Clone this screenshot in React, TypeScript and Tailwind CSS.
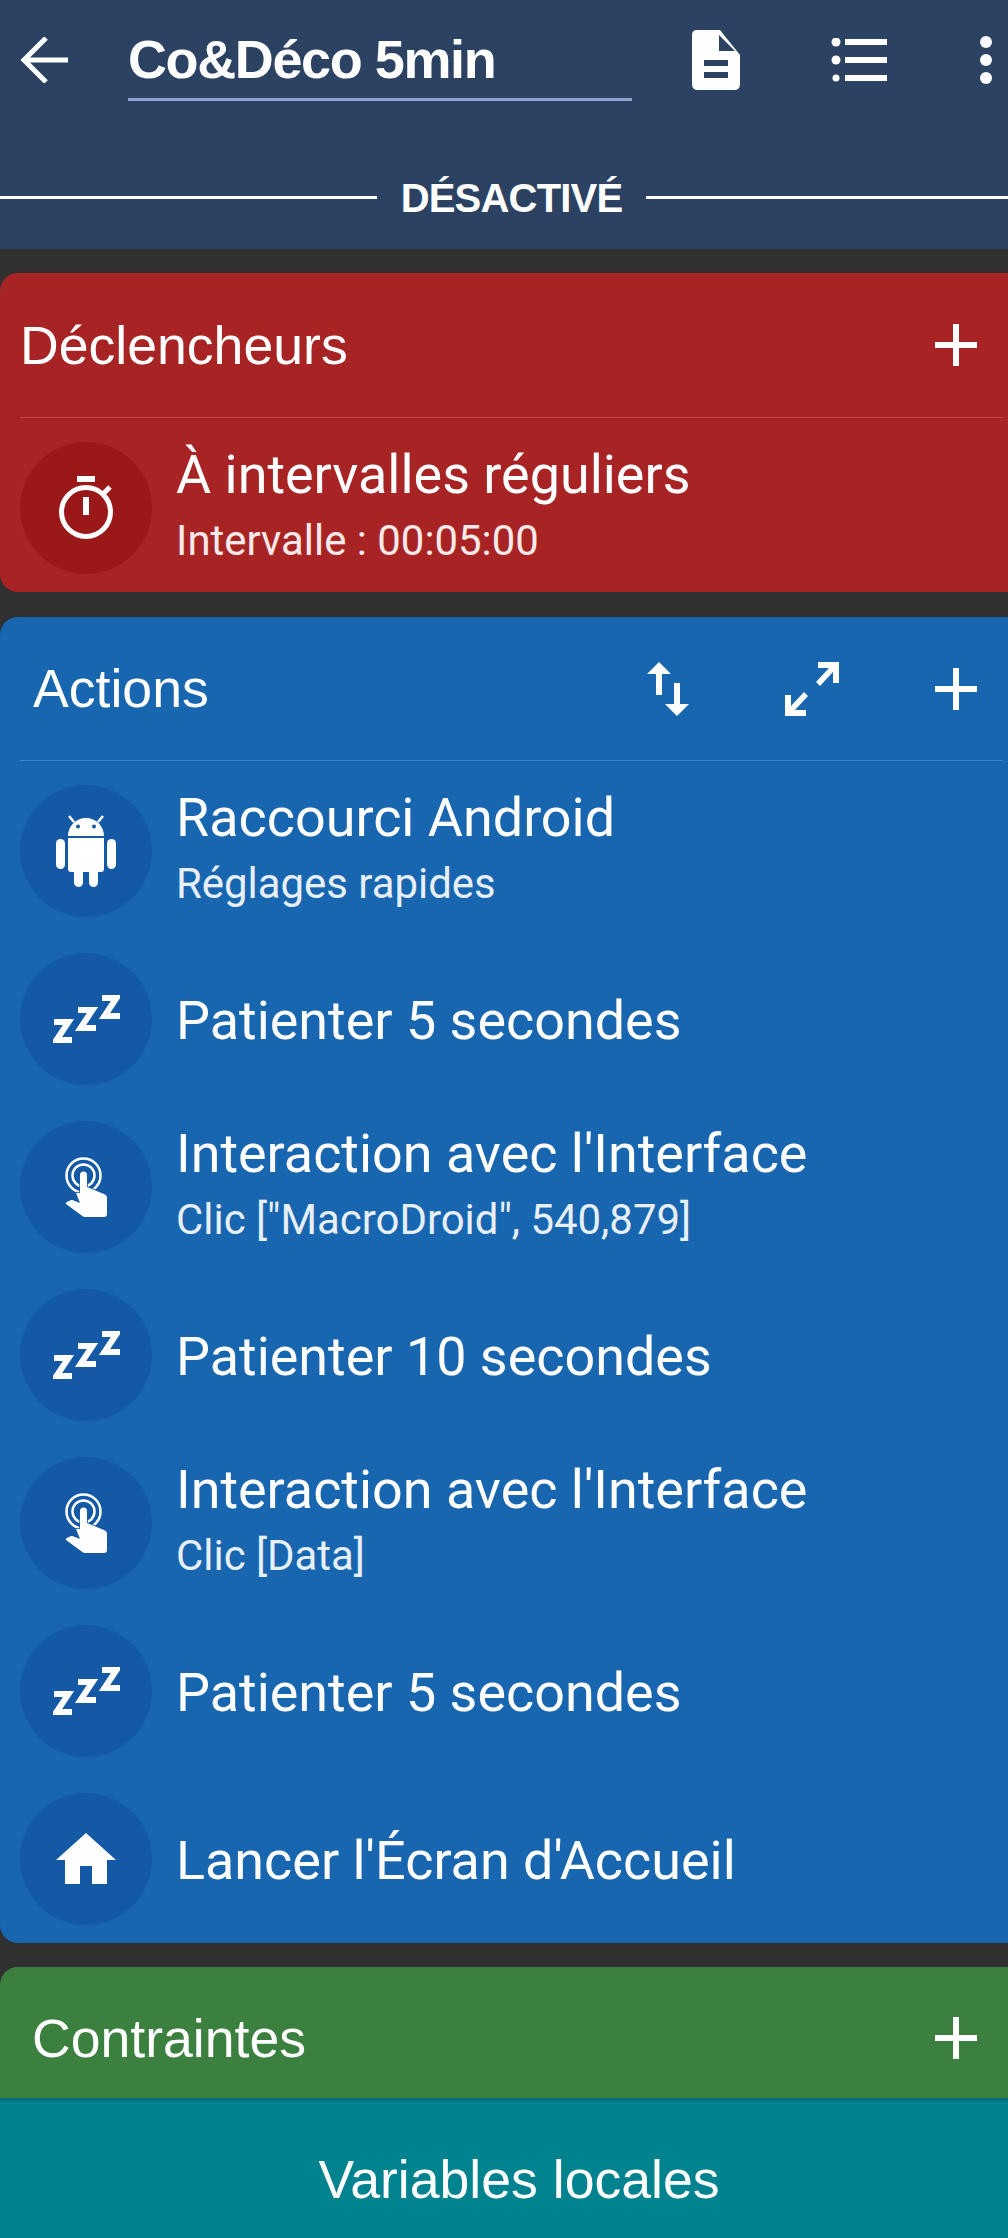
import React from 'react';

const PlusIcon = () => (
  <svg width="42" height="42" viewBox="0 0 42 42" fill="#fff">
    <rect x="18" y="0" width="6" height="42" />
    <rect x="0" y="18" width="42" height="6" />
  </svg>
);

const TimerIcon = () => (
  <svg width="54" height="64" viewBox="0 0 54 64" fill="none" stroke="#fff">
    <rect x="18" y="0" width="18" height="6" fill="#fff" stroke="none" />
    <circle cx="27" cy="36" r="24.5" strokeWidth="5" />
    <rect x="24" y="21" width="6" height="18" fill="#fff" stroke="none" />
    <path d="M44 18 L51 11" strokeWidth="5" />
  </svg>
);

const AndroidIcon = () => (
  <svg width="60" height="72" viewBox="0 0 60 72" fill="#fff">
    <path fillRule="evenodd" d="M12 21 C12 11 20 3 30 3 C40 3 48 11 48 21 Z M20 11.5 a2 2 0 1 0 4 0 a2 2 0 1 0 -4 0 Z M36 11.5 a2 2 0 1 0 4 0 a2 2 0 1 0 -4 0 Z" />
    <path d="M18 7 L13 1 M42 7 L47 1" stroke="#fff" strokeWidth="2.5" fill="none" />
    <path d="M12 23 H48 V54 Q48 57 45 57 H15 Q12 57 12 54 Z" />
    <rect x="0" y="24" width="9" height="30" rx="4.5" />
    <rect x="51" y="24" width="9" height="30" rx="4.5" />
    <rect x="18" y="48" width="9" height="24" rx="4.5" />
    <rect x="33" y="48" width="9" height="24" rx="4.5" />
  </svg>
);

const Z = ({ x, y }: { x: number; y: number }) => (
  <path transform={`translate(${x} ${y})`} d="M1 3 H15.5 L3.5 21 H19" />
);

const ZzzIcon = () => (
  <svg width="67" height="48" viewBox="0 0 67 48" fill="none" stroke="#fff" strokeWidth="6">
    <Z x={0} y={24} />
    <Z x={24} y={12} />
    <Z x={48} y={0} />
  </svg>
);

const TouchIcon = () => (
  <svg width="42" height="60" viewBox="0 0 42 60" fill="#fff">
    <circle cx="18.5" cy="18.5" r="17" fill="none" stroke="#fff" strokeWidth="2.5" />
    <circle cx="18.5" cy="18.5" r="11" fill="none" stroke="#fff" strokeWidth="2.5" />
    <path d="M11 36 H15 V18 a3.5 3.5 0 0 1 7 0 V30 L39 37 Q42 38 42 41 V57 Q42 60 39 60 H20 Q18 60 16 58 L1 47 Q0 46 2 45 L6 43 Q8 43 10 44 L15 46 Z" stroke="#1459a5" strokeWidth="1.5" paintOrder="stroke" />
  </svg>
);

const HomeIcon = () => (
  <svg width="60" height="52" viewBox="0 0 60 52" fill="#fff">
    <path d="M30 0 L60 27 H51 V51 H36 V33 H24 V51 H9 V27 H0 Z" />
  </svg>
);

const Row = ({ icon, title, sub, circle }: { icon: React.ReactNode; title: string; sub?: string; circle: string }) => (
  <div className="flex items-center h-[168px] pl-5">
    <div className={`w-[132px] h-[132px] rounded-full flex items-center justify-center shrink-0 ${circle}`}>{icon}</div>
    <div className={`ml-6 flex flex-col ${sub ? 'pb-[6px]' : ''}`}>
      <div className={`text-[53.9px] leading-[60px] text-white ${sub ? '' : 'pt-[3px]'}`}>{title}</div>
      {sub && <div className="text-[41.9px] leading-[50px] mt-[11px] text-white/90">{sub}</div>}
    </div>
  </div>
);

const blueCircle = 'bg-[#1459a5]';

export default function App() {
  return (
    <div className="w-[1008px] h-[2238px] overflow-hidden flex flex-col bg-[#303030] font-['Roboto',sans-serif] text-white">
      <header className="h-[249px] bg-[#2c4262] shrink-0 flex flex-col">
        <div className="flex items-start h-[102px]">
          <svg className="ml-5 mt-[37px] shrink-0" width="48" height="46" viewBox="0 0 48 46" fill="none" stroke="#fff" strokeWidth="5">
            <path d="M26 1 L4 23 L26 45 M4 23 H48" />
          </svg>
          <div className="ml-[60px] w-[504px] h-[101px] border-b-[3px] border-[#8b9fd0] pt-[29px] text-[54px] leading-[60px] font-['Liberation_Sans',sans-serif] font-bold tracking-[-1.4px] shrink-0">
            Co&amp;Déco 5min
          </div>
          <svg className="ml-[60px] mt-[30px] shrink-0" width="48" height="60" viewBox="0 0 48 60" fill="#fff">
            <path fillRule="evenodd" d="M5 0 H28 L48 25 V54 Q48 60 42 60 H6 Q0 60 0 54 V5 Q0 0 5 0 Z M12 30 V36 H36 V30 Z M12 42 V48 H36 V42 Z" />
            <path d="M27 5 V21 H43 Z" fill="#2c4262" />
          </svg>
          <svg className="ml-[91px] mt-[38px] shrink-0" width="56" height="44" viewBox="0 0 56 44" fill="#fff">
            <circle cx="5" cy="4" r="4.5" />
            <circle cx="5" cy="22" r="4.5" />
            <circle cx="5" cy="40" r="3.5" />
            <rect x="14" y="1" width="42" height="6" />
            <rect x="14" y="19" width="42" height="6" />
            <rect x="14" y="37" width="42" height="6" />
          </svg>
          <svg className="ml-[93px] mt-[36px] shrink-0" width="12" height="48" viewBox="0 0 12 48" fill="#fff">
            <circle cx="6" cy="6" r="6" />
            <circle cx="6" cy="24" r="6" />
            <circle cx="6" cy="42" r="6" />
          </svg>
        </div>
        <div className="flex items-center mt-[63px]">
          <div className="w-[377px] h-[3px] bg-white" />
          <div className="w-[269px] text-center text-[40px] leading-[62px] pt-[2px] font-['Liberation_Sans',sans-serif] font-bold tracking-[-0.8px]">DÉSACTIVÉ</div>
          <div className="flex-1 h-[3px] bg-white" />
        </div>
      </header>

      <section className="mt-6 h-[319px] shrink-0 bg-[#a82424] rounded-l-[18px] flex flex-col">
        <div className="flex items-center justify-between h-[144px] pl-5 pr-[31px] shrink-0">
          <span className="text-[53.6px] font-['Liberation_Sans',sans-serif]">Déclencheurs</span>
          <PlusIcon />
        </div>
        <div className="ml-5 mr-[5px] h-px bg-[#c24a4a]" />
        <div className="pt-[6px]">
          <Row icon={<TimerIcon />} title="À intervalles réguliers" sub="Intervalle : 00:05:00" circle="bg-[#9a1818]" />
        </div>
      </section>

      <section className="mt-[25px] h-[1326px] shrink-0 bg-[#1865b0] rounded-l-[18px] flex flex-col">
        <div className="flex items-center h-[143px] pl-[33px] pr-[31px] shrink-0">
          <span className="text-[53.6px] font-['Liberation_Sans',sans-serif]">Actions</span>
          <svg className="ml-auto" width="42" height="54" viewBox="0 0 42 54" fill="#fff">
            <path d="M0 12 L12 0 L24 12 H15 V33 H9 V12 Z" />
            <path d="M18 42 H27 V21 H33 V42 H42 L30 54 Z" />
          </svg>
          <svg className="ml-[96px]" width="54" height="54" viewBox="0 0 54 54" fill="#fff">
            <path d="M33 0 H54 V21 H48 V10 L35 24 L31 20 L44 6 H33 Z" />
            <path d="M21 54 H0 V33 H6 V44 L19 30 L23 34 L10 48 H21 Z" />
          </svg>
          <div className="ml-[96px]"><PlusIcon /></div>
        </div>
        <div className="ml-5 mr-[5px] h-px bg-[#3a82cc]" />
        <div className="pt-[6px]">
          <Row icon={<AndroidIcon />} title="Raccourci Android" sub="Réglages rapides" circle={blueCircle} />
          <Row icon={<ZzzIcon />} title="Patienter 5 secondes" circle={blueCircle} />
          <Row icon={<TouchIcon />} title="Interaction avec l'Interface" sub={'Clic ["MacroDroid", 540,879]'} circle={blueCircle} />
          <Row icon={<ZzzIcon />} title="Patienter 10 secondes" circle={blueCircle} />
          <Row icon={<TouchIcon />} title="Interaction avec l'Interface" sub="Clic [Data]" circle={blueCircle} />
          <Row icon={<ZzzIcon />} title="Patienter 5 secondes" circle={blueCircle} />
          <Row icon={<HomeIcon />} title="Lancer l'Écran d'Accueil" circle={blueCircle} />
        </div>
      </section>

      <section className="mt-6 h-[131px] shrink-0 bg-[#3c8040] rounded-tl-[18px] flex items-center justify-between pl-[32px] pr-[31px] pt-[11px]">
        <span className="text-[53.6px] leading-[60px] font-['Liberation_Sans',sans-serif]">Contraintes</span>
        <PlusIcon />
      </section>

      <footer className="flex-1 bg-[#00838f] border-t-[3px] border-[#00707a] flex items-center justify-center pl-[30px] pt-[18px]">
        <span className="text-[53.6px] leading-[60px] font-['Liberation_Sans',sans-serif]">Variables locales</span>
      </footer>
    </div>
  );
}
